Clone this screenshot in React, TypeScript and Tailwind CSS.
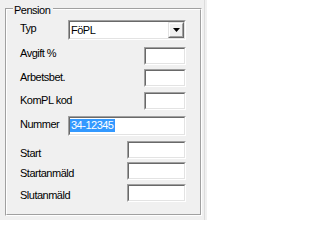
import React from "react";

const font = "font-['Liberation_Sans',Arial,sans-serif] text-[11px] tracking-[-0.5px] leading-[12px] text-black";

function Sunken({ className, children }: { className?: string; children?: React.ReactNode }) {
  return (
    <div className={`border border-t-[#a0a0a0] border-l-[#a0a0a0] border-r-white border-b-white ${className ?? ""}`}>
      <div className="h-full w-full border border-t-[#696969] border-l-[#696969] border-r-[#e3e3e3] border-b-[#e3e3e3] bg-white">
        {children}
      </div>
    </div>
  );
}

function Row({
  label,
  mt,
  pt,
  children,
}: {
  label: string;
  mt: string;
  pt: string;
  children: React.ReactNode;
}) {
  return (
    <div className={`flex items-start justify-between ${mt}`}>
      <span className={`${pt} whitespace-nowrap`}>{label}</span>
      {children}
    </div>
  );
}

export default function App() {
  return (
    <div className={`relative flex h-[220px] w-[207px] bg-[#f0f0f0] ${font}`}>
      <div className="w-[204px] pl-[5px] pt-[8px]">
        <div className="relative h-[208px] w-[197px] border border-t-[#a0a0a0] border-l-[#a0a0a0] border-r-white border-b-white">
          <span className="absolute left-[7px] top-[-5px] bg-[#f0f0f0] pl-[1px] pr-[3px]">Pension</span>
          <div className="flex h-full w-full flex-col border border-t-white border-l-white border-r-[#a0a0a0] border-b-[#a0a0a0] pl-[13px] pr-[14px]">
            <Row label="Typ" mt="mt-[10px]" pt="pt-[2px]">
              <Sunken className="h-[20px] w-[118px]">
                <div className="flex h-full items-start">
                  <span className="flex-1 pl-[1px] pt-[2px]">FöPL</span>
                  <div className="h-full w-[16px] border border-t-[#e3e3e3] border-l-[#e3e3e3] border-r-[#696969] border-b-[#696969] bg-[#f0f0f0]">
                    <div className="flex h-full w-full items-center justify-center border border-t-white border-l-white border-r-[#a0a0a0] border-b-[#a0a0a0]">
                      <svg width="7" height="4" viewBox="0 0 7 4" className="block">
                        <path d="M0 0H7L3.5 4Z" fill="#000" />
                      </svg>
                    </div>
                  </div>
                </div>
              </Sunken>
            </Row>
            <Row label="Avgift %" mt="mt-[7px]" pt="pt-0">
              <Sunken className="h-[18px] w-[42px]" />
            </Row>
            <Row label="Arbetsbet." mt="mt-[4px]" pt="pt-[2px]">
              <Sunken className="h-[18px] w-[42px]" />
            </Row>
            <Row label="KomPL kod" mt="mt-[5px]" pt="pt-[2px]">
              <Sunken className="h-[18px] w-[42px]" />
            </Row>
            <Row label="Nummer" mt="mt-[6px]" pt="pt-[2px]">
              <Sunken className="h-[20px] w-[118px]">
                <div className="pt-[1px]">
                  <span className="inline-block bg-[#3399ff] px-[1px] leading-[13px] text-white">34-12345</span>
                </div>
              </Sunken>
            </Row>
            <Row label="Start" mt="mt-[5px]" pt="pt-[6px]">
              <Sunken className="h-[18px] w-[59px]" />
            </Row>
            <Row label="Startanmäld" mt="mt-[3px]" pt="pt-[5px]">
              <Sunken className="h-[18px] w-[59px]" />
            </Row>
            <Row label="Slutanmäld" mt="mt-[4px]" pt="pt-[5px]">
              <Sunken className="h-[18px] w-[59px]" />
            </Row>
          </div>
        </div>
      </div>
      <div className="h-full w-px bg-[#dcdcdc]" />
    </div>
  );
}
